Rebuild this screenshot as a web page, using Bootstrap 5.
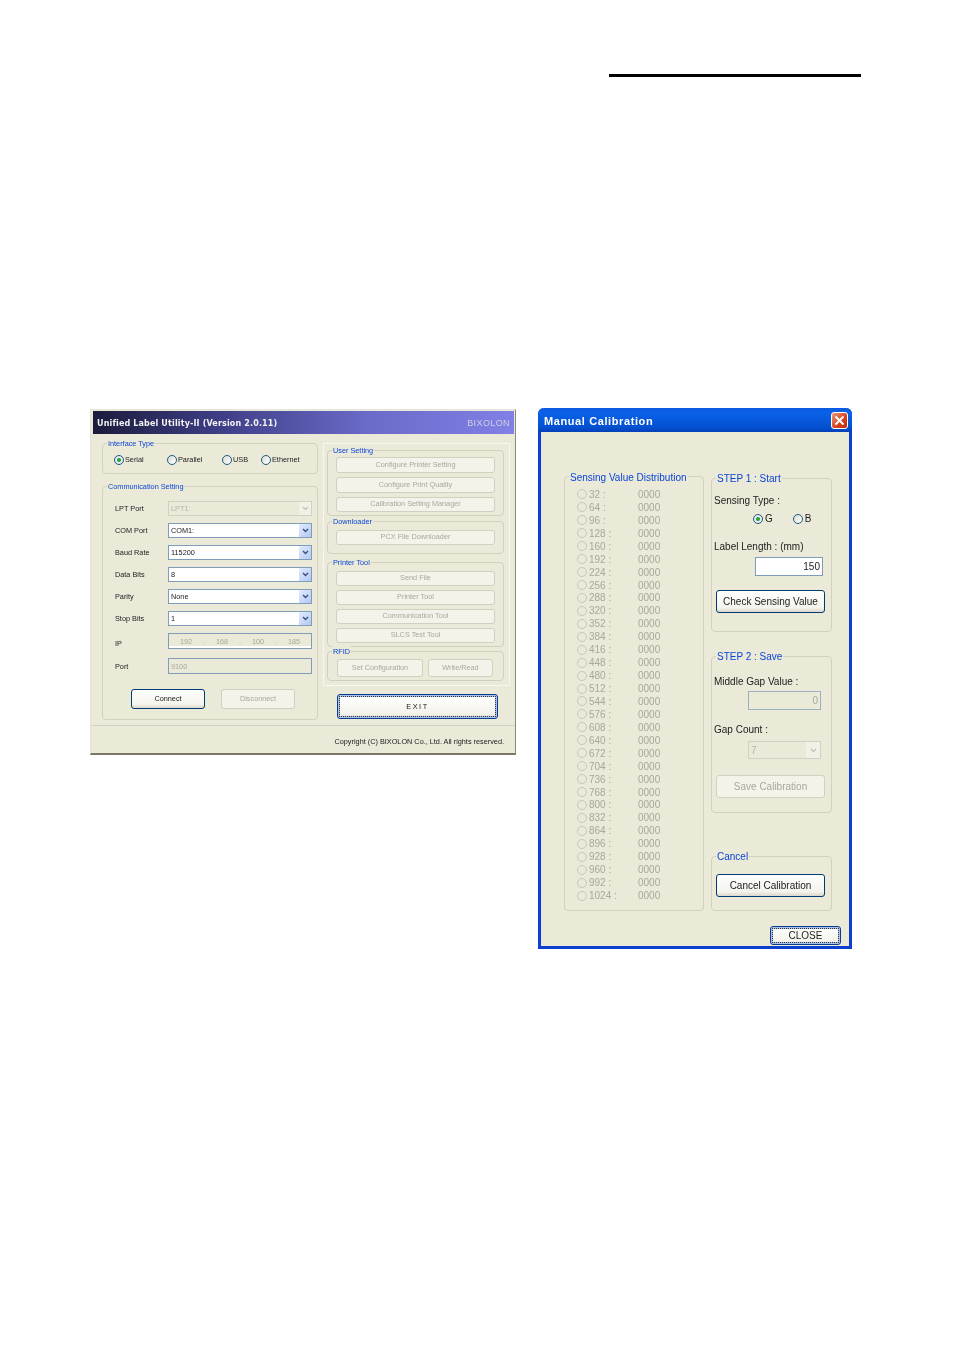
<!DOCTYPE html>
<html lang="en">
<head>
    <meta charset="UTF-8">
    <meta name="viewport" content="width=device-width, initial-scale=1.0">
    <title>Calibration</title>
    <link href="https://cdn.jsdelivr.net/npm/bootstrap@5.3.0/dist/css/bootstrap.min.css" rel="stylesheet">
    <style>
        body { background: #fff; font-family: "Liberation Sans", Arial, sans-serif; color: #222; }
        .top-rule { width: 252px; height: 3px; margin: 74px 0 0 609px; background: #000; }
        .shots { margin: 331px 0 0 90px; gap: 22px; }

        /* shared xp widgets */
        .grp { position: relative; border: 1px solid #d2d0bf; border-radius: 4px; }
        .grp-title { position: absolute; left: 4px; background: #ebe9d8; color: #0a46d6; padding: 0 1px; white-space: nowrap; }
        .xp-radio { flex: none; width: 10px; height: 10px; border: 1px solid #1f5a80; border-radius: 50%; background: linear-gradient(135deg, #dcdcd4, #fff); }
        .xp-radio.on { background: radial-gradient(circle, #2fa83a 0 1.6px, #eef 2.4px, #dcdcd4 100%); }
        .xp-radio.off { border-color: #c8c7b8; background: #ebe9d8; }
        .xp-btn { display: flex; align-items: center; justify-content: center; border: 1px solid #003c74; border-radius: 3px; background: linear-gradient(#fff, #f4f3ec 80%, #dcd8c8); color: #222; }
        .xp-btn.dis { border-color: #d2d0c0; background: #f4f3ea; color: #a9a89a; }
        .xp-btn.focus { outline: 1px dotted #333; outline-offset: -3px; border-color: #0a3c8c; box-shadow: inset 0 0 0 2px #a9c2ee; }

        /* left window */
        .win-a { width: 426px; height: 346px; margin-top: 1px; background: #ebe9d8; border: 1px solid #e6e4d8; border-right-color: #8a8878; border-bottom: 2px solid #7a7868; font-size: 7.3px; filter: blur(.3px); }
        .bar-a { height: 23px; margin: 1px 1px 0 2px; padding: 2px 4px 0 4px; background: linear-gradient(90deg, #1b1b3c, #3e3e86 30%, #6a6ac8 65%, #8080e6); }
        .bar-a b { font-family: "DejaVu Sans", sans-serif; font-size: 8px; color: #f2f2f2; letter-spacing: .15px; }
        .bar-a span { color: #cfcfe6; font-size: 9px; letter-spacing: .4px; }
        .cols-a { padding: 9px 0 0 11px; }
        .col-left { width: 216px; }
        .col-right { width: 187px; margin-left: 5px; }
        .col-left .grp-title, .col-right .grp-title { top: -6px; line-height: 11px; }
        .radios-a { height: 31px; padding-top: 10px; }
        .radio-item { position: absolute; top: 11px; gap: 1px; line-height: 10px; }
        .comm { height: 234px; margin-top: 12px; padding: 14px 5px 0 12px; }
        .comm-row { height: 15px; margin-bottom: 7px; line-height: 15px; }
        .comm-row > label { width: 53px; margin: 0; }
        .xp-sel { width: 144px; height: 15px; display: flex; align-items: center; justify-content: space-between; padding: 0 0 0 2px; background: #fff; border: 1px solid #7f9db9; color: #222; }
        .xp-sel.dis { background: #ebe9d8; border-color: #d2d0c0; color: #b4b3a6; }
        .xp-arrow { width: 12px; height: 13px; display: flex; align-items: center; justify-content: center; background: linear-gradient(135deg, #e4ecfc, #b4c8f4); }
        .dis > .xp-arrow { background: #f2f1e8; }
        .xp-arrow svg { display: block; }
        .ip-box { width: 144px; height: 16px; display: flex; align-items: center; border: 1px solid #7f9db9; background: #ebe9d8; color: #a9a89a; }
        .ip-box.wht { background: linear-gradient(#ebe9d8 85%, #fff 85%); }
        .ip-box span { flex: 1; text-align: center; }
        .ip-box.txt { padding-left: 2px; }
        .port-row { margin-top: 10px; }
        .ip-row > label { padding-top: 3px; }
        .port-row > label { padding-top: 1px; }
        .btn-row-a { gap: 16px; margin: 16px 0 0 16px; }
        .btn-row-a .xp-btn { height: 20px; width: 74px; }
        .panel-a { height: 243px; padding: 6px 0 0 3px; border: 1px solid #f8f7f0; }
        .panel-a .grp { width: 177px; }
        .panel-a .xp-btn { width: 159px; margin-left: 8px; }
        .g-user { height: 66px; padding-top: 6px; }
        .g-dl { height: 33px; margin-top: 5px; padding-top: 8px; }
        .g-tool { height: 85px; margin-top: 8px; padding-top: 8px; }
        .g-rfid { height: 30px; margin-top: 4px; padding-top: 7px; gap: 5px; padding-left: 9px; }
        .panel-a .g-rfid .xp-btn { margin: 0; height: 18px; }
        .b16 { height: 16px; }
        .b15 { height: 15px; }
        .exit-btn { width: 161px; height: 25px; margin: 8px 0 0 14px; padding-top: 1px; letter-spacing: 1.6px; }
        .foot-a { margin: 5px 0 0 0; border-top: 1px solid #d2d0c0; padding: 11px 11px 0 0; text-align: right; line-height: 10px; color: #222; }

        /* right window */
        .win-b { width: 314px; height: 541px; background: #ebe9d8; border: 3px solid #0a3fd0; border-top: 0; border-radius: 6px 6px 0 0; font-size: 10px; filter: blur(.3px); }
        .bar-b { height: 24px; margin: 0 -3px; padding: 2px 4px 0 6px; border-radius: 6px 6px 0 0; background: linear-gradient(#0a5ae0, #0b62e8 20%, #0450d0 80%, #0340b8); color: #fff; font-weight: 700; font-size: 11px; letter-spacing: .6px; }
        .x-btn { width: 17px; height: 17px; margin-top: -2px; border: 1px solid #fff; border-radius: 3px; background: linear-gradient(135deg, #e89a80, #d8401c 60%, #c02a10); }
        .x-btn svg { display: block; }
        .cols-b { padding: 44px 0 0 23px; gap: 7px; }
        .win-b .grp-title { line-height: 12px; top: -6px; }
        .dist { width: 140px; height: 435px; padding: 11px 0 0 12px; }
        .dist .grp-title { top: -5px; }
        .dist-row { height: 12.95px; line-height: 13px; color: #a9a89a; }
        .dist-row .n { width: 51px; padding-left: 2px; }
        .col-steps { width: 121px; padding-top: 2px; }
        .step1 { height: 154px; padding: 16px 0 0 2px; }
        .step2 { height: 157px; margin-top: 24px; padding: 19px 0 0 2px; }
        .step3 { height: 55px; margin-top: 43px; padding-top: 17px; }
        .col-steps .xp-btn { width: 109px; height: 23px; margin-left: 4px; }
        .step1 .xp-btn { margin: 0 0 0 2px; }
        .step2 .xp-btn { margin: 0 0 0 2px; }
        .line { line-height: 12px; }
        .sense { gap: 0; margin: 7px 0 0 39px; line-height: 10px; }
        .sense .xp-radio { margin-right: 2px; }
        .sense span + .xp-radio { margin-left: 20px; }
        .len-line { margin-top: 17px; }
        .len-in { width: 68px; height: 19px; margin: 4px 0 14px 41px; padding-right: 2px; border: 1px solid #7f9db9; background: #fff; line-height: 17px; text-align: right; }
        .gap-in { width: 73px; height: 19px; margin: 3px 0 14px 34px; padding-right: 2px; border: 1px solid #9cb0c4; background: #ebe9d8; line-height: 17px; text-align: right; color: #a9a89a; }
        .gap-sel { width: 73px; height: 18px; margin: 5px 0 16px 34px; }
        .gap-sel .xp-arrow { height: 16px; width: 14px; }
        .close-btn { width: 71px; height: 19px; margin: 15px 0 0 229px; }
    </style>
</head>
<body>

    <div class="top-rule"></div>

    <div class="shots d-flex align-items-start">

        <!-- Unified Label Utility -->
        <div class="win-a">
            <div class="bar-a d-flex align-items-center justify-content-between">
                <b>Unified Label Utility-II (Version 2.0.11)</b>
                <span>BIXOLON</span>
            </div>
            <div class="cols-a d-flex">
                <div class="col-left">
                    <div class="grp radios-a">
                        <span class="grp-title">Interface Type</span>
                        <div class="radio-item d-flex align-items-center" style="left: 11px"><i class="xp-radio on"></i>Serial</div>
                        <div class="radio-item d-flex align-items-center" style="left: 64px"><i class="xp-radio"></i>Parallel</div>
                        <div class="radio-item d-flex align-items-center" style="left: 119px"><i class="xp-radio"></i>USB</div>
                        <div class="radio-item d-flex align-items-center" style="left: 158px"><i class="xp-radio"></i>Ethernet</div>
                    </div>
                    <div class="grp comm">
                        <span class="grp-title">Communication Setting</span>
                        <div class="comm-row d-flex"><label>LPT Port</label><div class="xp-sel dis">LPT1:<span class="xp-arrow"><svg width="7" height="5" viewBox="0 0 7 5"><path d="M1 1l2.5 2.5L6 1" fill="none" stroke="#c4c3b6" stroke-width="1.4"/></svg></span></div></div>
                        <div class="comm-row d-flex"><label>COM Port</label><div class="xp-sel">COM1:<span class="xp-arrow"><svg width="7" height="5" viewBox="0 0 7 5"><path d="M1 1l2.5 2.5L6 1" fill="none" stroke="#3a4f80" stroke-width="1.4"/></svg></span></div></div>
                        <div class="comm-row d-flex"><label>Baud Rate</label><div class="xp-sel">115200<span class="xp-arrow"><svg width="7" height="5" viewBox="0 0 7 5"><path d="M1 1l2.5 2.5L6 1" fill="none" stroke="#3a4f80" stroke-width="1.4"/></svg></span></div></div>
                        <div class="comm-row d-flex"><label>Data Bits</label><div class="xp-sel">8<span class="xp-arrow"><svg width="7" height="5" viewBox="0 0 7 5"><path d="M1 1l2.5 2.5L6 1" fill="none" stroke="#3a4f80" stroke-width="1.4"/></svg></span></div></div>
                        <div class="comm-row d-flex"><label>Parity</label><div class="xp-sel">None<span class="xp-arrow"><svg width="7" height="5" viewBox="0 0 7 5"><path d="M1 1l2.5 2.5L6 1" fill="none" stroke="#3a4f80" stroke-width="1.4"/></svg></span></div></div>
                        <div class="comm-row d-flex"><label>Stop Bits</label><div class="xp-sel">1<span class="xp-arrow"><svg width="7" height="5" viewBox="0 0 7 5"><path d="M1 1l2.5 2.5L6 1" fill="none" stroke="#3a4f80" stroke-width="1.4"/></svg></span></div></div>
                        <div class="comm-row ip-row d-flex"><label>IP</label><div class="ip-box wht"><span>192</span>.<span>168</span>.<span>100</span>.<span>185</span></div></div>
                        <div class="comm-row ip-row port-row d-flex"><label>Port</label><div class="ip-box txt">9100</div></div>
                        <div class="btn-row-a d-flex">
                            <div class="xp-btn">Connect</div>
                            <div class="xp-btn dis">Disconnect</div>
                        </div>
                    </div>
                </div>
                <div class="col-right">
                    <div class="panel-a">
                        <div class="grp g-user">
                            <span class="grp-title">User Setting</span>
                            <div class="xp-btn dis b16">Configure Printer Setting</div>
                            <div class="xp-btn dis b16 mt-1">Configure Print Quality</div>
                            <div class="xp-btn dis b15 mt-1">Calibration Setting Manager</div>
                        </div>
                        <div class="grp g-dl">
                            <span class="grp-title">Downloader</span>
                            <div class="xp-btn dis b15">PCX File Downloader</div>
                        </div>
                        <div class="grp g-tool">
                            <span class="grp-title">Printer Tool</span>
                            <div class="xp-btn dis b15">Send File</div>
                            <div class="xp-btn dis b15 mt-1">Printer Tool</div>
                            <div class="xp-btn dis b15 mt-1">Communication Tool</div>
                            <div class="xp-btn dis b15 mt-1">SLCS Test Tool</div>
                        </div>
                        <div class="grp g-rfid d-flex">
                            <span class="grp-title">RFID</span>
                            <div class="xp-btn dis" style="width: 86px">Set Configuration</div>
                            <div class="xp-btn dis" style="width: 65px">Write/Read</div>
                        </div>
                    </div>
                    <div class="xp-btn focus exit-btn">EXIT</div>
                </div>
            </div>
            <div class="foot-a">Copyright (C) BIXOLON Co., Ltd. All rights reserved.</div>
        </div>

        <!-- Manual Calibration -->
        <div class="win-b">
            <div class="bar-b d-flex align-items-center justify-content-between">
                <span>Manual Calibration</span>
                <span class="x-btn"><svg width="15" height="15" viewBox="0 0 15 15"><path d="M3.5 3.5l8 8M11.5 3.5l-8 8" stroke="#fff" stroke-width="2"/></svg></span>
            </div>
            <div class="cols-b d-flex align-items-start">
                <div class="grp dist" id="dist">
                    <span class="grp-title">Sensing Value Distribution</span>
                </div>
                <div class="col-steps">
                    <div class="grp step1">
                        <span class="grp-title">STEP 1 : Start</span>
                        <div class="line">Sensing Type :</div>
                        <div class="sense d-flex align-items-center"><i class="xp-radio on"></i><span>G</span><i class="xp-radio"></i><span>B</span></div>
                        <div class="line len-line">Label Length : (mm)</div>
                        <div class="len-in">150</div>
                        <div class="xp-btn">Check Sensing Value</div>
                    </div>
                    <div class="grp step2">
                        <span class="grp-title">STEP 2 : Save</span>
                        <div class="line">Middle Gap Value :</div>
                        <div class="gap-in">0</div>
                        <div class="line">Gap Count :</div>
                        <div class="xp-sel dis gap-sel">7<span class="xp-arrow"><svg width="7" height="5" viewBox="0 0 7 5"><path d="M1 1l2.5 2.5L6 1" fill="none" stroke="#c4c3b6" stroke-width="1.4"/></svg></span></div>
                        <div class="xp-btn dis">Save Calibration</div>
                    </div>
                    <div class="grp step3">
                        <span class="grp-title">Cancel</span>
                        <div class="xp-btn">Cancel Calibration</div>
                    </div>
                </div>
            </div>
            <div class="xp-btn focus close-btn">CLOSE</div>
        </div>
    </div>

    <script>
        // linhas da distribuição: 32, 64, ... 1024
        const dist = document.getElementById('dist');
        for (let i = 1; i <= 32; i++) {
            const row = document.createElement('div');
            row.className = 'dist-row d-flex align-items-center';
            row.innerHTML = '<i class="xp-radio off"></i><span class="n">' + (i * 32) + ' :</span><span>0000</span>';
            dist.appendChild(row);
        }
    </script>

    <script src="https://cdn.jsdelivr.net/npm/bootstrap@5.3.0/dist/js/bootstrap.bundle.min.js"></script>
</body>
</html>
